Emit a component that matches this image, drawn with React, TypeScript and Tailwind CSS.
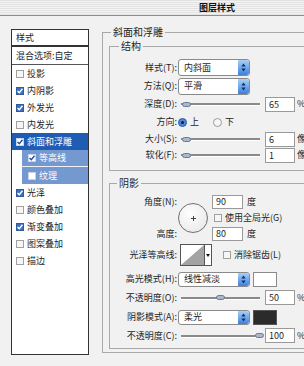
import React from "react";

function Check({ on, variant = "normal" }: { on: boolean; variant?: "normal" | "white" }) {
  if (variant === "white") {
    return (
      <span className="w-[8px] h-[8px] flex-none border border-[#c8d4e8] bg-white flex items-center justify-center">
        {on && (
          <svg width="6" height="6" viewBox="0 0 6 6">
            <path d="M0.5 3 L2.3 4.8 L5.5 0.8" stroke="#1f4f9a" strokeWidth="1.4" fill="none" />
          </svg>
        )}
      </span>
    );
  }
  return on ? (
    <span className="w-[8px] h-[8px] flex-none border border-[#2f5a9e] bg-[#3d6fbf] flex items-center justify-center">
      <svg width="6" height="6" viewBox="0 0 6 6">
        <path d="M0.5 3 L2.3 4.8 L5.5 0.8" stroke="#ffffff" strokeWidth="1.4" fill="none" />
      </svg>
    </span>
  ) : (
    <span className="w-[8px] h-[8px] flex-none border border-[#a0a0a0] bg-[#f6f6f6]" />
  );
}

function Item({ label, on }: { label: string; on: boolean }) {
  return (
    <div className="h-[17px] flex items-center pl-[4px] gap-[3px]">
      <Check on={on} />
      <span>{label}</span>
    </div>
  );
}

function Arrow() {
  return (
    <span className="ml-auto w-[11px] h-full flex-none rounded-r-[2px] bg-[linear-gradient(to_bottom,#a9d0f7,#3d80dc)] flex items-center justify-center">
      <svg width="5" height="9" viewBox="0 0 5 9">
        <path d="M2.5 0.5 L4.6 3.5 H0.4Z M2.5 8.5 L4.6 5.5 H0.4Z" fill="#0b2f6b" />
      </svg>
    </span>
  );
}

function Select({ value, h = "h-[17px]" }: { value: string; h?: string }) {
  return (
    <div
      className={
        "ml-[1px] w-[72px] flex-none border border-[#8a8a8a] rounded-[3px] bg-white flex items-center overflow-hidden " + h
      }
    >
      <span className="pl-[5px]">{value}</span>
      <Arrow />
    </div>
  );
}

function Slider({ pos }: { pos: number }) {
  return (
    <div className="ml-[4px] w-[79px] h-[8px] flex-none relative flex items-center">
      <div className="w-full h-[2px] bg-[#8a8a8a] shadow-[0_1px_0_#ffffff]" />
      <span
        className="absolute top-[1.5px] w-[9px] h-[5px] rounded-full bg-[#a9b8cc] border border-[#6a7a90]"
        style={{ left: pos }}
      />
    </div>
  );
}

function Num({ v }: { v: string }) {
  return (
    <span className="ml-[5px] w-[30px] h-[15px] flex-none border border-[#9a9a9a] bg-white flex items-center pl-[3px] leading-none">
      {v}
    </span>
  );
}

function Label({ children }: { children: React.ReactNode }) {
  return <span className="w-[67px] flex-none text-right whitespace-nowrap">{children}</span>;
}

function SliderRow({ label, pos, v, unit, h }: { label: string; pos: number; v: string; unit: string; h: string }) {
  return (
    <div className={"flex items-center " + h}>
      <Label>{label}</Label>
      <Slider pos={pos} />
      <Num v={v} />
      <span className="ml-[2px] whitespace-nowrap">{unit}</span>
    </div>
  );
}

export default function App() {
  return (
    <div className="w-[304px] h-[366px] overflow-hidden bg-[#f1f1f1] flex flex-col font-['Noto_Sans_CJK_SC',sans-serif] text-[9px] text-[#1e1e1e] leading-[12px]">
      <div className="h-[16px] flex-none border-b border-[#8e8e8e] bg-[repeating-linear-gradient(to_bottom,#e2e2e2_0px,#e2e2e2_1px,#f4f4f4_1px,#f4f4f4_2px)] pl-[199px] flex items-center">
        <span className="text-[9px] font-bold text-[#111]">图层样式</span>
      </div>
      <div className="flex flex-row flex-1">
        <div className="ml-[11px] mt-[13px] w-[78px] h-[326px] flex-none border border-[#333] bg-white flex flex-col">
          <div className="h-[17px] border-b-2 border-[#333] pl-[4px] flex items-center">样式</div>
          <div className="h-[18px] border-b border-[#555] pl-[4px] flex items-center">混合选项:自定</div>
          <Item label="投影" on={false} />
          <Item label="内阴影" on={true} />
          <Item label="外发光" on={true} />
          <Item label="内发光" on={false} />
          <div className="h-[17px] flex items-center pl-[4px] gap-[3px] bg-[#1f5cb3] text-white">
            <Check on={true} variant="white" />
            <span>斜面和浮雕</span>
          </div>
          <div className="h-[17px] ml-[10px] flex items-center pl-[6px] gap-[3px] bg-[#7399d0] text-white border-b border-[#f0f0f0]">
            <Check on={true} variant="white" />
            <span>等高线</span>
          </div>
          <div className="h-[17px] ml-[10px] flex items-center pl-[6px] gap-[3px] bg-[#7399d0] text-white">
            <Check on={false} variant="white" />
            <span>纹理</span>
          </div>
          <Item label="光泽" on={true} />
          <Item label="颜色叠加" on={false} />
          <Item label="渐变叠加" on={true} />
          <Item label="图案叠加" on={false} />
          <Item label="描边" on={false} />
        </div>

        <div className="ml-[13px] w-[215px] flex-none">
          <fieldset className="mt-[10px] border border-[#a8a8a8] pl-[6px] pr-[6px] pt-[2px] pb-[3px]">
            <legend className="ml-[2px] px-[2px] text-[10px] leading-[12px]">斜面和浮雕</legend>

            <fieldset className="border border-[#a8a8a8] pt-[6px] pb-[7px]">
              <legend className="ml-[9px] px-[2px] text-[10px] leading-[12px]">结构</legend>
              <div className="h-[19px] flex items-center">
                <Label>样式(T):</Label>
                <Select value="内斜面" />
              </div>
              <div className="h-[18px] flex items-center">
                <Label>方法(Q):</Label>
                <Select value="平滑" />
              </div>
              <SliderRow label="深度(D):" pos={1} v="65" unit="%" h="h-[18px]" />
              <div className="h-[18px] flex items-center">
                <Label>方向:</Label>
                <span className="ml-[1px] w-[9px] h-[9px] flex-none rounded-full border border-[#2a5aa8] bg-[#4f86d6] flex items-center justify-center">
                  <span className="w-[3px] h-[3px] rounded-full bg-[#0d1f3a]" />
                </span>
                <span className="ml-[3px]">上</span>
                <span className="ml-[14px] w-[9px] h-[9px] flex-none rounded-full border border-[#9a9a9a] bg-[#f7f7f7]" />
                <span className="ml-[3px]">下</span>
              </div>
              <SliderRow label="大小(S):" pos={1} v="6" unit="像素" h="h-[16px]" />
              <SliderRow label="软化(F):" pos={1} v="1" unit="像素" h="h-[16px]" />
            </fieldset>

            <fieldset className="mt-[6px] border border-[#a8a8a8] pt-[5px] pb-[4px]">
              <legend className="ml-[7px] px-[2px] text-[10px] leading-[12px]">阴影</legend>
              <div className="h-[48px] flex">
                <div className="w-[67px] flex-none flex flex-col text-right">
                  <span className="h-[16px] flex items-center justify-end">角度(N):</span>
                  <span className="h-[16px]" />
                  <span className="h-[16px] flex items-center justify-end">高度:</span>
                </div>
                <div className="w-[35px] flex-none flex items-center">
                  <div className="ml-[1px] w-[30px] h-[30px] rounded-full border border-[#707070] bg-[radial-gradient(circle_at_40%_35%,#ffffff,#e4e4e4)] flex items-center justify-center">
                    <svg width="5" height="5" viewBox="0 0 5 5">
                      <path d="M2.5 0 V5 M0 2.5 H5" stroke="#444" strokeWidth="1" />
                    </svg>
                  </div>
                </div>
                <div className="flex flex-col">
                  <div className="h-[16px] flex items-center">
                    <span className="w-[31px] h-[14px] border border-[#9a9a9a] bg-white flex items-center pl-[3px]">90</span>
                    <span className="ml-[4px]">度</span>
                  </div>
                  <div className="h-[16px] flex items-center pl-[2px] gap-[3px] whitespace-nowrap">
                    <Check on={false} />
                    <span>使用全局光(G)</span>
                  </div>
                  <div className="h-[16px] flex items-center">
                    <span className="w-[31px] h-[14px] border border-[#9a9a9a] bg-white flex items-center pl-[3px]">80</span>
                    <span className="ml-[4px]">度</span>
                  </div>
                </div>
              </div>

              <div className="mt-[2px] h-[22px] flex items-center">
                <Label>光泽等高线:</Label>
                <div className="ml-[3px] flex h-[22px]">
                  <div className="w-[25px] h-[22px] border border-[#555] bg-white">
                    <svg width="23" height="20" viewBox="0 0 23 20">
                      <path d="M23 0 L23 20 L0 20 Z" fill="#a3a3a3" />
                    </svg>
                  </div>
                  <div className="w-[7px] h-[22px] border border-l-0 border-[#555] bg-white flex items-center justify-center">
                    <svg width="4" height="3" viewBox="0 0 4 3">
                      <path d="M0 0 H4 L2 3 Z" fill="#111" />
                    </svg>
                  </div>
                </div>
                <div className="ml-[11px] flex items-center gap-[3px] whitespace-nowrap">
                  <Check on={false} />
                  <span>消除锯齿(L)</span>
                </div>
              </div>

              <div className="mt-[4px] h-[18px] flex items-center">
                <Label>高光模式(H):</Label>
                <Select value="线性减淡" h="h-[15px]" />
                <span className="ml-[3px] w-[24px] h-[15px] border border-[#8a8a8a] bg-white" />
              </div>
              <SliderRow label="不透明度(O):" pos={35} v="50" unit="%" h="h-[19px]" />
              <div className="h-[20px] flex items-center">
                <Label>阴影模式(A):</Label>
                <Select value="柔光" h="h-[15px]" />
                <span className="ml-[3px] w-[24px] h-[15px] border border-[#555] bg-[#2b2b2b]" />
              </div>
              <SliderRow label="不透明度(C):" pos={74} v="100" unit="%" h="h-[17px]" />
            </fieldset>
          </fieldset>
        </div>
      </div>
    </div>
  );
}
